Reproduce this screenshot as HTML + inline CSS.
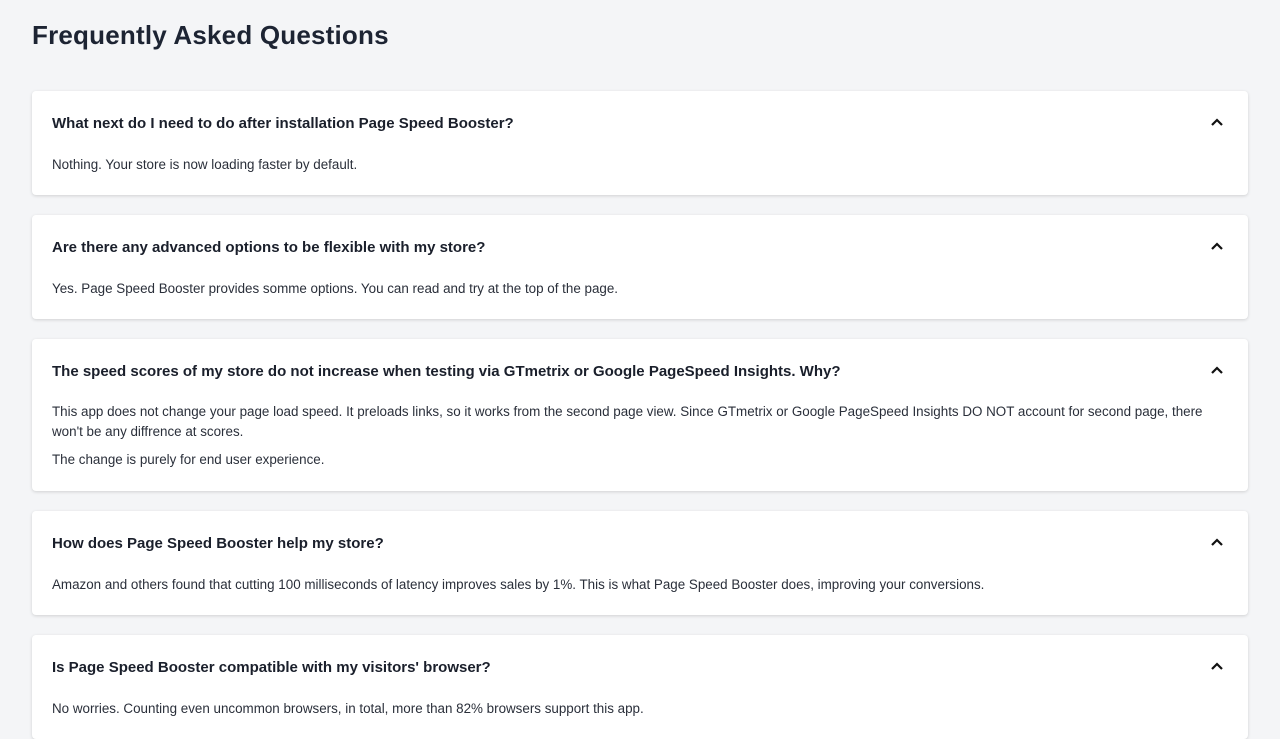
<!DOCTYPE html>
<html><head><meta charset="utf-8"><style>
body{margin:0;background:#f4f5f7;font-family:"Liberation Sans",sans-serif;color:#1f2430;width:1280px;height:720px;overflow:hidden;position:relative}
h1{position:absolute;left:32px;top:20px;margin:0;font-size:26px;line-height:30px;font-weight:bold;color:#1d2433;letter-spacing:0.2px}
.card{position:absolute;left:32px;width:1216px;background:#fff;border-radius:4px;box-shadow:0 1px 3px rgba(0,0,0,.15)}
.q{position:absolute;left:20px;top:23px;font-size:15px;font-weight:bold;color:#1a1f2b;line-height:20px;white-space:nowrap}
.a{position:absolute;left:20px;font-size:13.4px;color:#2a2f3a;line-height:20px;white-space:nowrap}
svg{position:absolute;right:24px;top:26px}
</style></head><body>
<h1>Frequently Asked Questions</h1>

<div class="card" style="top:91px;height:104px">
<div class="q">What next do I need to do after installation Page Speed Booster?</div>
<svg width="14" height="10" viewBox="0 0 14 10"><path d="M2 8L7 3L12 8" stroke="#111" stroke-width="2.2" fill="none"/></svg>
<div class="a" style="top:64px">Nothing. Your store is now loading faster by default.</div>
</div>

<div class="card" style="top:215px;height:104px">
<div class="q">Are there any advanced options to be flexible with my store?</div>
<svg width="14" height="10" viewBox="0 0 14 10"><path d="M2 8L7 3L12 8" stroke="#111" stroke-width="2.2" fill="none"/></svg>
<div class="a" style="top:64px">Yes. Page Speed Booster provides somme options. You can read and try at the top of the page.</div>
</div>

<div class="card" style="top:339px;height:152px">
<div class="q">The speed scores of my store do not increase when testing via GTmetrix or Google PageSpeed Insights. Why?</div>
<svg width="14" height="10" viewBox="0 0 14 10"><path d="M2 8L7 3L12 8" stroke="#111" stroke-width="2.2" fill="none"/></svg>
<div class="a" style="top:63px">This app does not change your page load speed. It preloads links, so it works from the second page view. Since GTmetrix or Google PageSpeed Insights DO NOT account for second page, there<br>won't be any diffrence at scores.</div>
<div class="a" style="top:111px">The change is purely for end user experience.</div>
</div>

<div class="card" style="top:511px;height:104px">
<div class="q">How does Page Speed Booster help my store?</div>
<svg width="14" height="10" viewBox="0 0 14 10"><path d="M2 8L7 3L12 8" stroke="#111" stroke-width="2.2" fill="none"/></svg>
<div class="a" style="top:64px">Amazon and others found that cutting 100 milliseconds of latency improves sales by 1%. This is what Page Speed Booster does, improving your conversions.</div>
</div>

<div class="card" style="top:635px;height:104px">
<div class="q">Is Page Speed Booster compatible with my visitors' browser?</div>
<svg width="14" height="10" viewBox="0 0 14 10"><path d="M2 8L7 3L12 8" stroke="#111" stroke-width="2.2" fill="none"/></svg>
<div class="a" style="top:64px">No worries. Counting even uncommon browsers, in total, more than 82% browsers support this app.</div>
</div>
</body></html>
